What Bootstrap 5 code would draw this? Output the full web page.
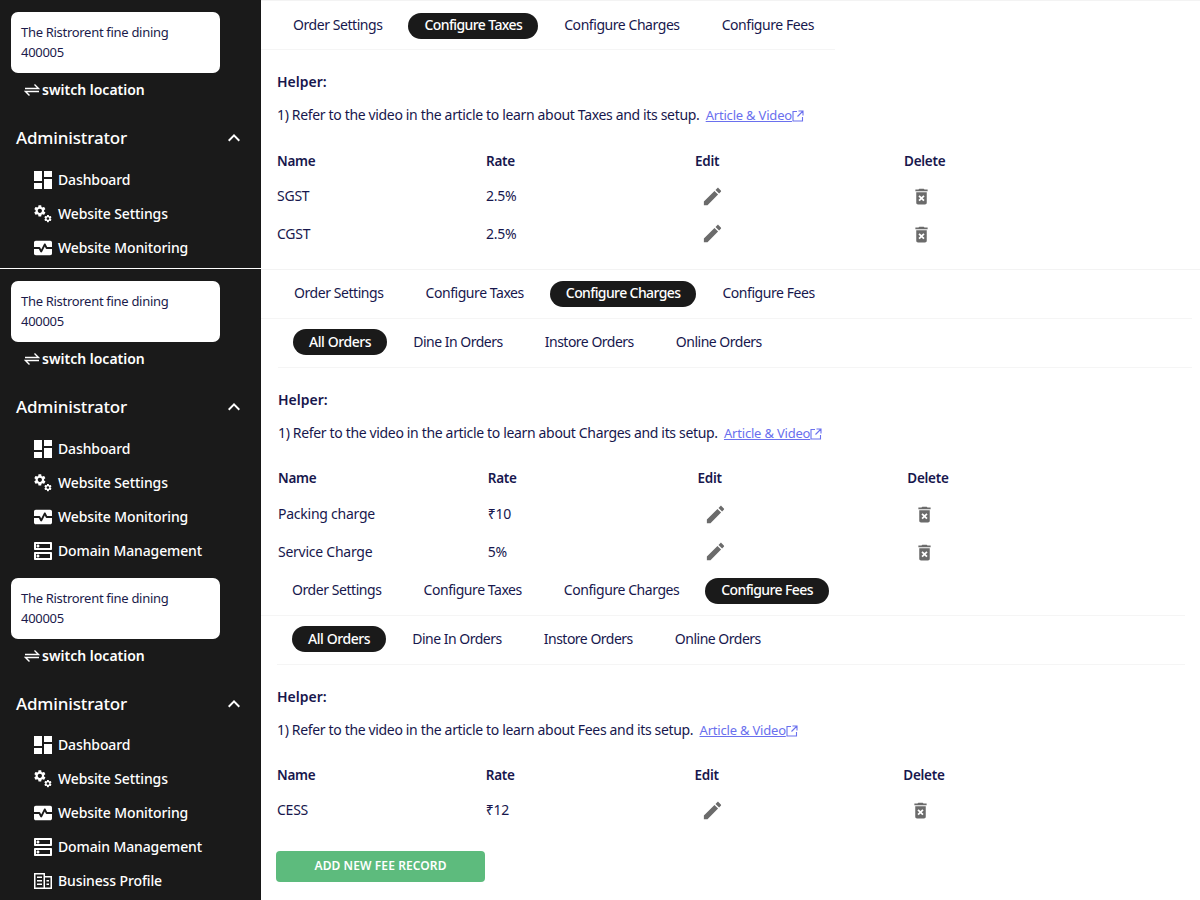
<!DOCTYPE html>
<html lang="en">
<head>
<meta charset="utf-8">
<title>Settings</title>
<link href="https://cdn.jsdelivr.net/npm/bootstrap@5.3.0/dist/css/bootstrap.min.css" rel="stylesheet">
<script src="https://cdn.jsdelivr.net/npm/bootstrap@5.3.0/dist/js/bootstrap.bundle.min.js"></script>
<style>
html,body{height:900px;overflow:hidden}
body{font-family:"Noto Sans","Liberation Sans",sans-serif;color:#17174d;background:#fff;font-size:14px}
.shot{display:flex;overflow:hidden}
.shot-a{height:268px;margin-bottom:1px}
.shot-b{height:301px}
.shot-c{height:330px}
.side{flex:0 0 261px;width:261px;background:#1a1a1a;color:#fff;padding:12px 0 0 11px;border-right:1px solid #171717}
.shot-c .side{padding-top:8px}
.loc{width:209px;height:61px;background:#fff;border-radius:7px;padding:10px 10px;color:#1b1b4b;font-size:13px;line-height:20px;letter-spacing:-.3px}
.switch{margin:7px 0 0 13px;height:20px;font-size:14px;font-weight:600;line-height:20px}
.switch svg{margin-right:2px}
.admin{margin:26px 14px 0 5px;height:24px;font-size:17px;font-weight:500;line-height:24px;letter-spacing:-.15px}
.admin svg{width:24px;height:24px}
.menu-rows{margin:12.5px 0 0 23px}
.shot-c .menu-rows{margin-top:11.5px}
.menu-row{height:34px;font-size:14px;font-weight:500;letter-spacing:-.12px}
.menu-row svg{width:18px;height:18px;margin-right:6px}
.main{flex:1 1 auto;min-width:0;border-top:1px solid #f3f3f3}
.shot-c .main{border-top:0}
.inner{padding:12px 0 0 16px}
.shot-a .inner{width:574px}
.shot-b .inner{padding:11px 0 0 17px;width:931px}
.shot-c .inner{padding-top:8px;width:924px}
.tabbar{display:flex;gap:10px;padding-bottom:10px;border-bottom:1px solid #f5f5f5;height:37px;margin-left:-16px;padding-left:16px}
.shot-b .tabbar{margin-left:-17px;padding-left:17px;height:38px}
.shot-c .tabbar{padding-left:15px;height:38px}
.subbar,.shot-b .subbar,.shot-c .subbar{margin:10px 0 0;height:39px;padding-left:15px}
.tab{height:26px;padding:0 16px 2px;border-radius:13px;color:#17174d;font-size:14px;line-height:24px;white-space:nowrap;text-decoration:none;letter-spacing:-.44px}
.subbar .tab{padding-bottom:1px;line-height:25px;letter-spacing:-.5px}
.tab.on{background:#1a1a1a;color:#fff;font-weight:500;letter-spacing:-.6px}
.subbar .tab.on{letter-spacing:-.42px}
.helper-h{margin-top:22px;font-weight:600;font-size:14px;line-height:20px}
.helper-t{margin-top:13px;font-size:14px;line-height:20px;letter-spacing:-.34px;white-space:nowrap}
.helper-t a{color:#6a70ee;font-size:13px;margin-left:3px;letter-spacing:-.2px}
.helper-t svg{width:12px;height:12px;vertical-align:-2px}
.rates{width:836px;margin-top:19px;table-layout:fixed;--bs-table-bg:transparent;--bs-table-color:#17174d;font-size:14px}
.shot-a .rates{margin-top:20px}
.shot-b .rates{width:839px}
.shot-c .rates{width:835px}
.rates th,.rates td{padding:0;border:0;letter-spacing:-.25px;vertical-align:middle}
.rates th{height:32px;font-weight:600;font-size:13.5px}
.shot-b .rates th{height:33px}
.rates td{height:37.5px}
.ic{width:23px;height:23px;color:#6b6b6b;margin-left:6px}
.ic.del{width:21px;height:21px;margin-left:7px}
.addbtn{display:block;margin:22px 0 0 -1px;width:209px;height:31px;padding:0;background:#5dbb7d;border:0;border-radius:4px;color:#fff;font-size:12px;font-weight:600;letter-spacing:.1px}
</style>
</head>
<body>
<svg width="0" height="0" class="d-none">
<symbol id="i-dash" viewBox="3 3 18 18"><path fill="currentColor" d="M3 13h8V3H3v10zm0 8h8v-6H3v6zm10 0h8V11h-8v10zm0-18v6h8V3h-8z"/></symbol>
<symbol id="i-gear" viewBox="0 0 22 22"><g fill="currentColor"><path transform="translate(-1.500 -1.500) scale(.72)" d="M19.140 12.940c.04-.3.06-.61.06-.94 0-.32-.02-.64-.07-.94l2.030-1.580c.18-.14.23-.41.12-.61l-1.920-3.320c-.12-.22-.37-.29-.59-.22l-2.390.96c-.5-.38-1.030-.7-1.620-.94l-.36-2.540c-.04-.24-.24-.41-.48-.41h-3.840c-.24 0-.43.17-.47.41l-.36 2.540c-.59.24-1.130.57-1.620.94l-2.390-.96c-.22-.08-.47 0-.59.22L2.740 8.870c-.12.21-.08.47.12.61l2.030 1.580c-.05.3-.09.63-.09.94s.02.64.07.94l-2.030 1.580c-.18.14-.23.41-.12.61l1.920 3.320c.12.22.37.29.59.22l2.390-.96c.5.38 1.030.7 1.620.94l.36 2.540c.05.24.24.41.48.41h3.840c.24 0 .44-.17.47-.41l.36-2.540c.59-.24 1.130-.56 1.620-.94l2.390.96c.22.08.47 0 .59-.22l1.920-3.320c.12-.22.07-.47-.12-.61l-2.010-1.580zM12 15.600c-1.980 0-3.600-1.620-3.600-3.600s1.620-3.600 3.600-3.600 3.600 1.620 3.600 3.600-1.620 3.600-3.600 3.600z"/><path transform="translate(11.500 11) scale(.46)" d="M19.140 12.940c.04-.3.06-.61.06-.94 0-.32-.02-.64-.07-.94l2.030-1.580c.18-.14.23-.41.12-.61l-1.920-3.320c-.12-.22-.37-.29-.59-.22l-2.390.96c-.5-.38-1.030-.7-1.620-.94l-.36-2.540c-.04-.24-.24-.41-.48-.41h-3.840c-.24 0-.43.17-.47.41l-.36 2.540c-.59.24-1.130.57-1.620.94l-2.390-.96c-.22-.08-.47 0-.59.22L2.740 8.870c-.12.21-.08.47.12.61l2.030 1.580c-.05.3-.09.63-.09.94s.02.64.07.94l-2.030 1.580c-.18.14-.23.41-.12.61l1.920 3.320c.12.22.37.29.59.22l2.390-.96c.5.38 1.030.7 1.620.94l.36 2.540c.05.24.24.41.48.41h3.840c.24 0 .44-.17.47-.41l.36-2.540c.59-.24 1.130-.56 1.620-.94l2.390.96c.22.08.47 0 .59-.22l1.920-3.320c.12-.22.07-.47-.12-.61l-2.010-1.580zM12 15.600c-1.980 0-3.600-1.620-3.600-3.600s1.620-3.600 3.600-3.600 3.600 1.620 3.600 3.600-1.620 3.600-3.600 3.600z"/></g></symbol>
<symbol id="i-mon" viewBox="2 4 20 16"><path fill="currentColor" d="M15.110 12.450 14 10.240l-3.110 6.210c-.16.34-.51.55-.89.55s-.73-.21-.89-.55L7.380 13H2v5c0 1.100.9 2 2 2h16c1.100 0 2-.9 2-2v-5h-6c-.38 0-.73-.21-.89-.55zM20 4H4c-1.100 0-2 .9-2 2v5h6c.38 0 .73.21.89.55L10 13.760l3.110-6.210c.34-.68 1.450-.68 1.790 0L16.620 11H22V6c0-1.100-.9-2-2-2z"/></symbol>
<symbol id="i-dns" viewBox="3 3 18 18"><path fill="currentColor" d="M19 15v4H5v-4h14m1-2H4c-.55 0-1 .45-1 1v6c0 .55.45 1 1 1h16c.55 0 1-.45 1-1v-6c0-.55-.45-1-1-1zM7 18.500c-.82 0-1.500-.67-1.500-1.500s.68-1.500 1.500-1.500 1.500.67 1.500 1.500-.67 1.500-1.500 1.500zM19 5v4H5V5h14m1-2H4c-.55 0-1 .45-1 1v6c0 .55.45 1 1 1h16c.55 0 1-.45 1-1V4c0-.55-.45-1-1-1zM7 8.500c-.82 0-1.500-.67-1.500-1.500S6.180 5.500 7 5.500 8.500 6.170 8.500 7 7.820 8.500 7 8.500z"/></symbol>
<symbol id="i-biz" viewBox="0 0 18 16"><path fill="currentColor" fill-rule="evenodd" d="M0 0h11v3h7v13H0zM1.500 1.500v13h8v-13zM11 4.500v10h5.500v-10zM3 3.500h5v1.500H3zM3 7h5v1.500H3zM3 10.500h5V12H3zM12.500 7h2.500v1.500h-2.500zM12.500 10.500h2.500V12h-2.500z"/></symbol>
<symbol id="i-up" viewBox="0 0 24 24"><path fill="currentColor" d="M12 8l-6 6 1.410 1.410L12 10.830l4.590 4.580L18 14z"/></symbol>
<symbol id="i-edit" viewBox="0 0 24 24"><path fill="currentColor" d="M3 17.250V21h3.750L17.810 9.940l-3.750-3.750L3 17.250zM20.710 7.040c.39-.39.39-1.020 0-1.410l-2.340-2.340c-.39-.39-1.020-.39-1.410 0l-1.830 1.830 3.750 3.750 1.830-1.830z"/></symbol>
<symbol id="i-del" viewBox="0 0 24 24"><path fill="currentColor" d="M6 19c0 1.100.9 2 2 2h8c1.100 0 2-.9 2-2V7H6v12zm2.460-7.120l1.410-1.410L12 12.590l2.120-2.120 1.410 1.410L13.410 14l2.120 2.120-1.410 1.410L12 15.410l-2.120 2.120-1.410-1.410L10.590 14l-2.130-2.120zM15.500 4l-1-1h-5l-1 1H5v2h14V4z"/></symbol>
<symbol id="i-swap" viewBox="0 0 16 16"><path fill="none" stroke="currentColor" stroke-width="1.400" d="M1 6.500h13.500L10.500 2.500M15 9.500H1.500l4 4"/></symbol>
<symbol id="i-ext" viewBox="0 0 12 12"><path fill="none" stroke="currentColor" stroke-width="1.100" d="M5 1.500H1v9.500h9.500V7M6.500 1h4.500v4.500M11 1 5.500 6.500"/></symbol>
</svg>

<section class="shot shot-a">
  <aside class="side">
    <div class="loc">The Ristrorent fine dining<br>400005</div>
    <div class="switch d-flex align-items-center"><svg width="16" height="16"><use href="#i-swap"/></svg>switch location</div>
    <div class="admin d-flex justify-content-between align-items-center"><span>Administrator</span><svg><use href="#i-up"/></svg></div>
    <div class="menu-rows">
      <div class="menu-row d-flex align-items-center"><svg><use href="#i-dash"/></svg>Dashboard</div>
      <div class="menu-row d-flex align-items-center"><svg><use href="#i-gear"/></svg>Website Settings</div>
      <div class="menu-row d-flex align-items-center"><svg><use href="#i-mon"/></svg>Website Monitoring</div>
    </div>
  </aside>
  <main class="main"><div class="inner">
    <nav class="tabbar"><a class="tab" href="#">Order Settings</a><a class="tab on" href="#">Configure Taxes</a><a class="tab" href="#">Configure Charges</a><a class="tab" href="#">Configure Fees</a></nav>
    <div class="helper-h">Helper:</div>
    <div class="helper-t">1) Refer to the video in the article to learn about Taxes and its setup. <a href="#">Article &amp; Video<svg><use href="#i-ext"/></svg></a></div>
    <table class="table rates mb-0"><thead><tr><th>Name</th><th>Rate</th><th>Edit</th><th>Delete</th></tr></thead><tbody>
      <tr><td>SGST</td><td>2.5%</td><td><svg class="ic"><use href="#i-edit"/></svg></td><td><svg class="ic del"><use href="#i-del"/></svg></td></tr>
      <tr><td>CGST</td><td>2.5%</td><td><svg class="ic"><use href="#i-edit"/></svg></td><td><svg class="ic del"><use href="#i-del"/></svg></td></tr>
    </tbody></table>
  </div></main>
</section>

<section class="shot shot-b">
  <aside class="side">
    <div class="loc">The Ristrorent fine dining<br>400005</div>
    <div class="switch d-flex align-items-center"><svg width="16" height="16"><use href="#i-swap"/></svg>switch location</div>
    <div class="admin d-flex justify-content-between align-items-center"><span>Administrator</span><svg><use href="#i-up"/></svg></div>
    <div class="menu-rows">
      <div class="menu-row d-flex align-items-center"><svg><use href="#i-dash"/></svg>Dashboard</div>
      <div class="menu-row d-flex align-items-center"><svg><use href="#i-gear"/></svg>Website Settings</div>
      <div class="menu-row d-flex align-items-center"><svg><use href="#i-mon"/></svg>Website Monitoring</div>
      <div class="menu-row d-flex align-items-center"><svg><use href="#i-dns"/></svg>Domain Management</div>
    </div>
  </aside>
  <main class="main"><div class="inner">
    <nav class="tabbar"><a class="tab" href="#">Order Settings</a><a class="tab" href="#">Configure Taxes</a><a class="tab on" href="#">Configure Charges</a><a class="tab" href="#">Configure Fees</a></nav>
    <nav class="tabbar subbar"><a class="tab on" href="#">All Orders</a><a class="tab" href="#">Dine In Orders</a><a class="tab" href="#">Instore Orders</a><a class="tab" href="#">Online Orders</a></nav>
    <div class="helper-h">Helper:</div>
    <div class="helper-t">1) Refer to the video in the article to learn about Charges and its setup. <a href="#">Article &amp; Video<svg><use href="#i-ext"/></svg></a></div>
    <table class="table rates mb-0"><thead><tr><th>Name</th><th>Rate</th><th>Edit</th><th>Delete</th></tr></thead><tbody>
      <tr><td>Packing charge</td><td>₹10</td><td><svg class="ic"><use href="#i-edit"/></svg></td><td><svg class="ic del"><use href="#i-del"/></svg></td></tr>
      <tr><td>Service Charge</td><td>5%</td><td><svg class="ic"><use href="#i-edit"/></svg></td><td><svg class="ic del"><use href="#i-del"/></svg></td></tr>
    </tbody></table>
  </div></main>
</section>

<section class="shot shot-c">
  <aside class="side">
    <div class="loc">The Ristrorent fine dining<br>400005</div>
    <div class="switch d-flex align-items-center"><svg width="16" height="16"><use href="#i-swap"/></svg>switch location</div>
    <div class="admin d-flex justify-content-between align-items-center"><span>Administrator</span><svg><use href="#i-up"/></svg></div>
    <div class="menu-rows">
      <div class="menu-row d-flex align-items-center"><svg><use href="#i-dash"/></svg>Dashboard</div>
      <div class="menu-row d-flex align-items-center"><svg><use href="#i-gear"/></svg>Website Settings</div>
      <div class="menu-row d-flex align-items-center"><svg><use href="#i-mon"/></svg>Website Monitoring</div>
      <div class="menu-row d-flex align-items-center"><svg><use href="#i-dns"/></svg>Domain Management</div>
      <div class="menu-row d-flex align-items-center"><svg><use href="#i-biz"/></svg>Business Profile</div>
    </div>
  </aside>
  <main class="main"><div class="inner">
    <nav class="tabbar"><a class="tab" href="#">Order Settings</a><a class="tab" href="#">Configure Taxes</a><a class="tab" href="#">Configure Charges</a><a class="tab on" href="#">Configure Fees</a></nav>
    <nav class="tabbar subbar"><a class="tab on" href="#">All Orders</a><a class="tab" href="#">Dine In Orders</a><a class="tab" href="#">Instore Orders</a><a class="tab" href="#">Online Orders</a></nav>
    <div class="helper-h">Helper:</div>
    <div class="helper-t">1) Refer to the video in the article to learn about Fees and its setup. <a href="#">Article &amp; Video<svg><use href="#i-ext"/></svg></a></div>
    <table class="table rates mb-0"><thead><tr><th>Name</th><th>Rate</th><th>Edit</th><th>Delete</th></tr></thead><tbody>
      <tr><td>CESS</td><td>₹12</td><td><svg class="ic"><use href="#i-edit"/></svg></td><td><svg class="ic del"><use href="#i-del"/></svg></td></tr>
    </tbody></table>
    <button class="btn addbtn text-uppercase">Add new fee record</button>
  </div></main>
</section>
</body>
</html>
